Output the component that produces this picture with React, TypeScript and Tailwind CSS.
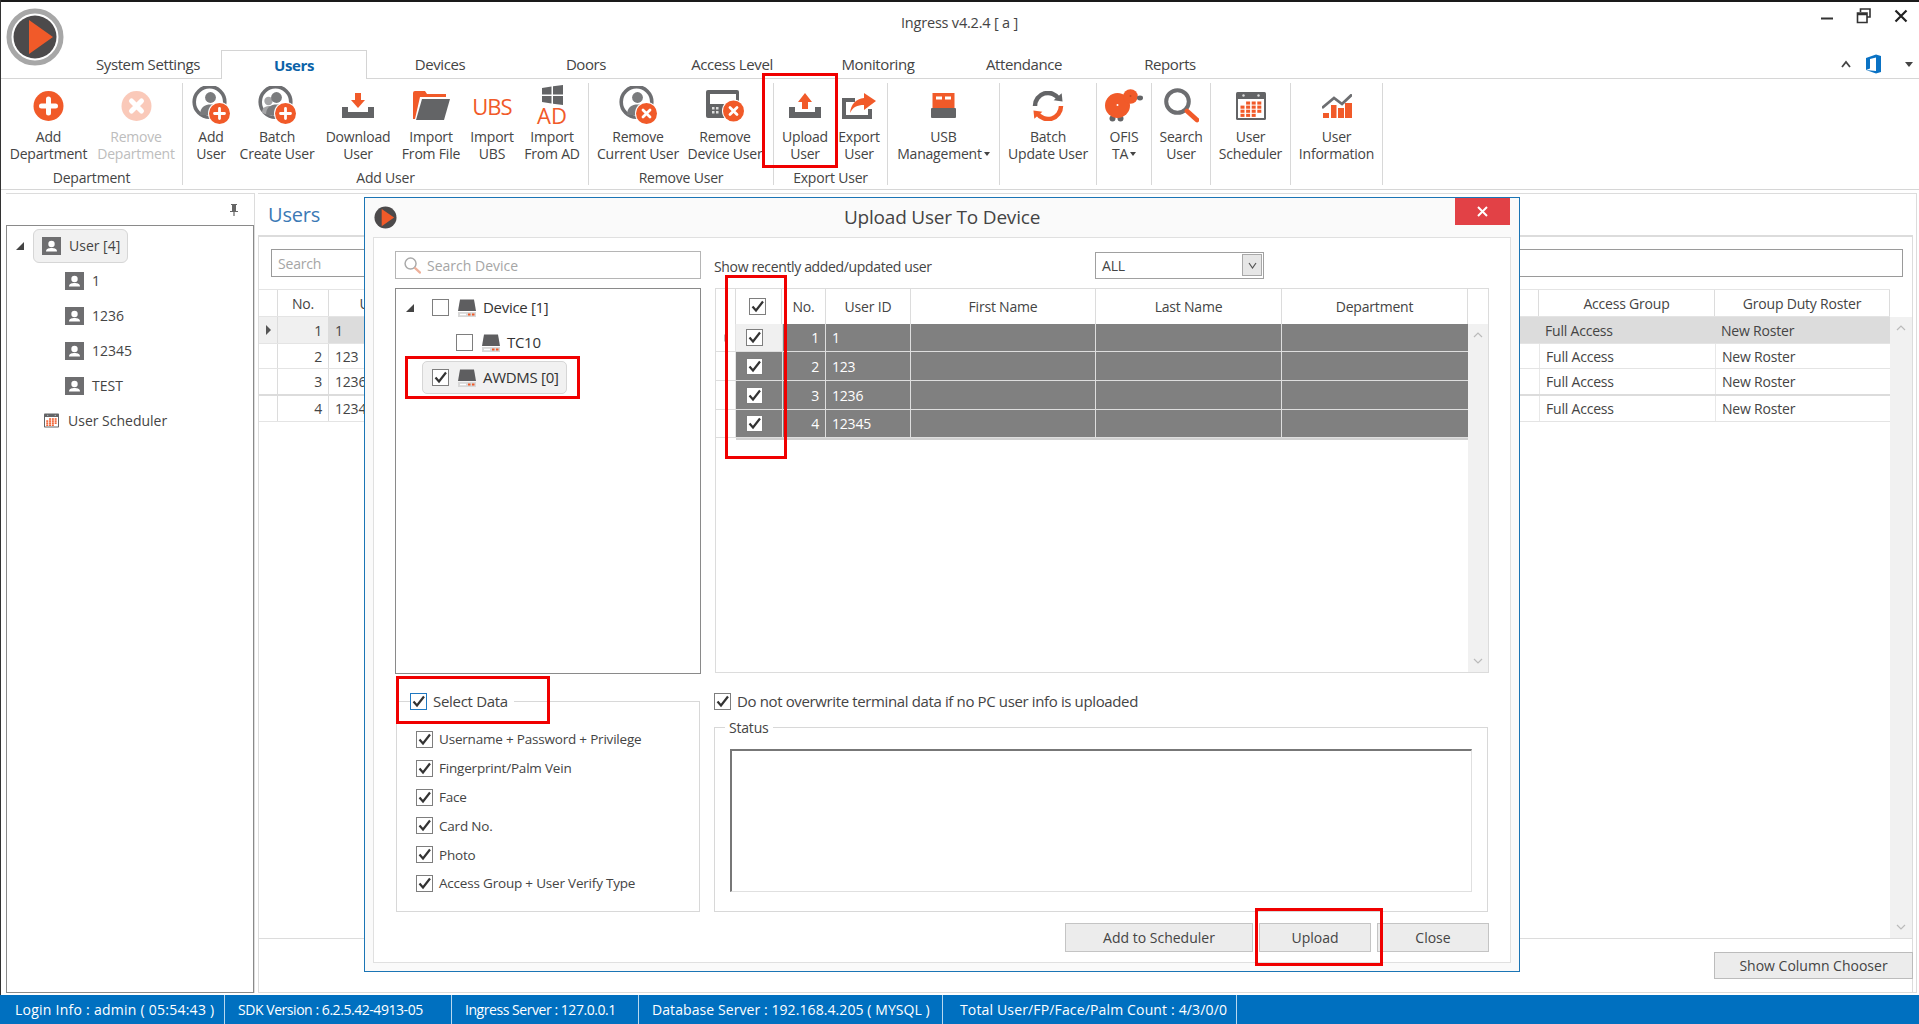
import React from "react";

const OR = "#f15a29";
const GR = "#636466";

function Logo({ size }: { size: number }) {
  return (
    <svg width={size} height={size} viewBox="0 0 58 58" className="shrink-0">
      <circle cx="29" cy="29" r="26" fill="none" stroke="#a7a7a7" strokeWidth="5" />
      <circle cx="29" cy="29" r="21.5" fill="#4c4a4b" />
      <path d="M23 12 L47 29 L23 46 Z" fill={OR} />
    </svg>
  );
}
function SmallLogo() {
  return (
    <svg width="23" height="23" viewBox="0 0 24 24" className="shrink-0">
      <circle cx="12" cy="12" r="11.5" fill="#4c4a4b" />
      <path d="M8 3 L21 12 L8 21 Z" fill={OR} />
    </svg>
  );
}
function CircleBadge({ kind, faded }: { kind: "plus" | "x"; faded?: boolean }) {
  return (
    <svg width="31" height="30" viewBox="0 0 30 30" opacity={faded ? 0.32 : 1}>
      <circle cx="15" cy="15" r="15" fill={OR} />
      {kind === "plus" ? (
        <path d="M15 8 V22 M8 15 H22" stroke="#fff" strokeWidth="5" strokeLinecap="round" />
      ) : (
        <path d="M10 10 L20 20 M20 10 L10 20" stroke="#fff" strokeWidth="5" strokeLinecap="round" />
      )}
    </svg>
  );
}
function Badge({ kind, cx, cy }: { kind: "plus" | "x"; cx: number; cy: number }) {
  return (
    <g>
      <circle cx={cx} cy={cy} r="11.5" fill="#fff" />
      <circle cx={cx} cy={cy} r="10.5" fill={OR} />
      {kind === "plus" ? (
        <path d={`M${cx} ${cy - 5} V${cy + 5} M${cx - 5} ${cy} H${cx + 5}`} stroke="#fff" strokeWidth="2.8" strokeLinecap="round" />
      ) : (
        <path d={`M${cx - 3.5} ${cy - 3.5} L${cx + 3.5} ${cy + 3.5} M${cx + 3.5} ${cy - 3.5} L${cx - 3.5} ${cy + 3.5}`} stroke="#fff" strokeWidth="2.8" strokeLinecap="round" />
      )}
    </g>
  );
}
function PersonRing({ kind, batch }: { kind: "plus" | "x"; batch?: boolean }) {
  return (
    <svg width="39" height="39" viewBox="0 0 39 39">
      <circle cx="17.5" cy="16" r="15.3" fill="none" stroke="#6d6e71" strokeWidth="3.6" />
      {batch && <circle cx="10.5" cy="15" r="4.2" fill="#a5a5a7" />}
      {batch && <path d="M4 27 C4 21 8 20 12 20 L14 30 Z" fill="#a5a5a7" />}
      <circle cx="18.5" cy="11.5" r="5.4" fill="#7a7b7d" />
      <path d="M8 29 C8 21 13 18.5 18.5 18.5 C24 18.5 29 21 29 29 Z" fill="#7a7b7d" />
      <Badge kind={kind} cx={27.5} cy={27.5} />
    </svg>
  );
}
function Tray({ up }: { up?: boolean }) {
  return (
    <svg width="32" height="25" viewBox="0 0 32 25">
      <path d="M0 14 H6 V19 H26 V14 H32 V25 H0 Z" fill={GR} />
      {up ? (
        <path d="M16 0 L23 9 H19 V16 H13 V9 H9 Z" fill={OR} />
      ) : (
        <path d="M13 0 H19 V7 H23 L16 15 L9 7 H13 Z" fill={OR} />
      )}
    </svg>
  );
}
function Folder() {
  return (
    <svg width="37" height="29" viewBox="0 0 37 29">
      <path d="M0 2 Q0 0 2 0 H12 L14 3 H33 V6 H7 L2 28 H0 Z" fill={OR} />
      <path d="M9 8 H37 L31 29 H3 Z" fill={GR} />
    </svg>
  );
}
function UbsIcon() {
  return <span className="text-[22px] leading-[22px] font-medium text-[#f15a29] tracking-[-1px]">UBS</span>;
}
function AdIcon() {
  return (
    <div className="flex flex-col items-center">
      <svg width="21" height="20" viewBox="0 0 21 20">
        <path d="M0 3 L9.5 1.5 V9.5 H0 Z M11 1.2 L21 0 V9.5 H11 Z M0 11 H9.5 V18.5 L0 17 Z M11 11 H21 V20 L11 18.7 Z" fill={GR} />
      </svg>
      <span className="text-[22px] leading-[21px] text-[#f15a29] tracking-[0px]">AD</span>
    </div>
  );
}
function DeviceX() {
  return (
    <svg width="39" height="32" viewBox="0 0 39 32">
      <rect x="0" y="0" width="33" height="28" rx="2" fill={GR} />
      <rect x="4" y="4" width="26" height="10" fill="#fff" />
      <rect x="6" y="17" width="2.5" height="2.5" fill="#ddd" />
      <rect x="10" y="17" width="2.5" height="2.5" fill="#ddd" />
      <rect x="6" y="21" width="2.5" height="2.5" fill="#ddd" />
      <rect x="10" y="21" width="2.5" height="2.5" fill="#ddd" />
      <Badge kind="x" cx={27.5} cy={21} />
    </svg>
  );
}
function ExportIcon() {
  return (
    <svg width="34" height="26" viewBox="0 0 34 26">
      <path d="M0 5 H13 V9 H4 V22 H26 V16 H30 V26 H0 Z" fill={GR} />
      <path d="M22 0 L34 8 L22 17 V12 C15 12 11 14 8 20 C9 11 14 6 22 5 Z" fill={OR} />
    </svg>
  );
}
function UsbIcon() {
  return (
    <svg width="25" height="25" viewBox="0 0 25 25">
      <rect x="1.5" y="0" width="22" height="15" fill={OR} />
      <rect x="5" y="3.5" width="6" height="3" fill="#fff" />
      <rect x="14" y="3.5" width="6" height="3" fill="#fff" />
      <rect x="0" y="15" width="25" height="10" rx="1" fill={GR} />
    </svg>
  );
}
function SyncIcon() {
  return (
    <svg width="32" height="30" viewBox="0 0 32 30">
      <path d="M3 15 A13 13 0 0 1 27 8" fill="none" stroke={GR} strokeWidth="4.5" />
      <path d="M22 10 L31 10 L29 2 Z" fill={GR} transform="rotate(8 27 7)" />
      <path d="M29 15 A13 13 0 0 1 5 22" fill="none" stroke={OR} strokeWidth="4.5" />
      <path d="M10 20 L1 20 L3 28 Z" fill={OR} transform="rotate(8 5 23)" />
    </svg>
  );
}
function SheepIcon() {
  return (
    <svg width="39" height="33" viewBox="0 0 39 33">
      <circle cx="7.5" cy="29.5" r="3" fill={GR} />
      <circle cx="15.5" cy="29.5" r="3" fill={GR} />
      <circle cx="12.5" cy="16.5" r="12.5" fill={OR} />
      <circle cx="25.5" cy="7.5" r="7.3" fill={OR} />
      <circle cx="25.5" cy="7" r="1" fill="#c44a20" />
      <ellipse cx="35" cy="9" rx="3" ry="2.4" fill={GR} />
      <circle cx="12.5" cy="16" r="1" fill="#fff" />
    </svg>
  );
}
function SearchIcon({ size = 35, thin }: { size?: number; thin?: boolean }) {
  return (
    <svg width={size} height={size} viewBox="0 0 35 35">
      <circle cx="13.5" cy="13.5" r="11.3" fill="none" stroke={thin ? "#a9a9a9" : "#6d6e71"} strokeWidth={thin ? 3 : 4} />
      <path d="M23 23 L33 32" stroke={thin ? "#eeb09a" : OR} strokeWidth="4.8" strokeLinecap="round" />
    </svg>
  );
}
function CalendarIcon({ w = 30, h = 28 }: { w?: number; h?: number }) {
  const cells: React.ReactNode[] = [];
  for (let r = 0; r < 4; r++)
    for (let c = 0; c < 4; c++) {
      if ((r === 0 && c === 0) || (r === 3 && c === 3)) continue;
      cells.push(<rect key={`${r}-${c}`} x={4.5 + c * 5.6} y={9.5 + r * 4.1} width="4" height="3.1" fill={OR} />);
    }
  return (
    <svg width={w} height={h} viewBox="0 0 30 28">
      <rect x="0" y="0" width="30" height="28" rx="1.5" fill={GR} />
      <rect x="2" y="7" width="26" height="19" fill="#fff" />
      <circle cx="7.5" cy="3.5" r="1.2" fill="#ddd" />
      <circle cx="22.5" cy="3.5" r="1.2" fill="#ddd" />
      {cells}
    </svg>
  );
}
function ChartIcon() {
  return (
    <svg width="30" height="24" viewBox="0 0 30 24">
      <path d="M0 14 L12 4 L20 10 L30 0.5" fill="none" stroke="#6d6e71" strokeWidth="2.8" />
      <rect x="1" y="19" width="6" height="5" fill={OR} />
      <rect x="9" y="11" width="5.5" height="13" fill={OR} />
      <rect x="16" y="14" width="6" height="10" fill={OR} />
      <rect x="23" y="9" width="7" height="15" fill={OR} />
    </svg>
  );
}
function OfficeIcon() {
  return (
    <svg width="17" height="20" viewBox="0 0 17 20">
      <path d="M1 4 L11 0.5 L16 2 V18 L11 19.5 L1 16 L11 17 V3.5 L5 5 V14.5 L1 16 Z" fill="#0a72c4" />
    </svg>
  );
}
function Check() {
  return (
    <svg width="15" height="15" viewBox="0 0 15 15">
      <path d="M2.5 7.5 L6 11.5 L13 2.5" fill="none" stroke="#333" strokeWidth="2.2" />
    </svg>
  );
}
function Box({ on, blue }: { on?: boolean; blue?: boolean }) {
  return (
    <span className={blue ? "w-[17px] h-[17px] shrink-0 flex items-center justify-center bg-white border border-[#1f78c1]" : "w-[17px] h-[17px] shrink-0 flex items-center justify-center bg-white border border-[#7e7e7e]"}>
      {on && <Check />}
    </span>
  );
}
function UserSquare() {
  return (
    <svg width="19" height="18" viewBox="0 0 19 18" className="shrink-0">
      <rect width="19" height="18" fill="#6e6e70" />
      <circle cx="9.5" cy="7" r="3.2" fill="#fff" />
      <path d="M4 14.5 C4 11.5 7 11 9.5 11 C12 11 15 11.5 15 14.5 Z" fill="#fff" />
    </svg>
  );
}
function DeviceSmall() {
  return (
    <svg width="18" height="18" viewBox="0 0 18 18" className="shrink-0">
      <path d="M2 0.5 H16 L18 12 H0 Z" fill="#5e5e60" />
      <rect x="0" y="13" width="18" height="5" fill="#d8d8d8" />
      <rect x="10" y="14.5" width="2.5" height="2" fill={OR} />
      <rect x="14" y="14.5" width="2.5" height="2" fill={OR} />
      <rect x="2" y="14.8" width="6" height="1.4" fill="#fff" />
    </svg>
  );
}
function TreeTri() {
  return <span className="w-0 h-0 border-l-[8px] border-l-transparent border-b-[8px] border-b-[#444] shrink-0" />;
}

type Item = { w: string; label: string[]; icon: React.ReactNode; muted?: boolean; caret?: boolean };
type Group = { w: string; pr: string; name?: string; items: Item[] };

const groups: Group[] = [
  { w: "w-[182px]", pr: "justify-start", name: "Department", items: [
    { w: "w-[95px]", label: ["Add", "Department"], icon: <CircleBadge kind="plus" /> },
    { w: "w-[80px]", label: ["Remove", "Department"], icon: <CircleBadge kind="x" faded />, muted: true },
  ] },
  { w: "w-[406px]", pr: "justify-start", name: "Add User", items: [
    { w: "w-[56px]", label: ["Add", "User"], icon: <PersonRing kind="plus" /> },
    { w: "w-[76px]", label: ["Batch", "Create User"], icon: <PersonRing kind="plus" batch /> },
    { w: "w-[86px]", label: ["Download", "User"], icon: <Tray /> },
    { w: "w-[60px]", label: ["Import", "From File"], icon: <Folder /> },
    { w: "w-[62px]", label: ["Import", "UBS"], icon: <UbsIcon /> },
    { w: "w-[58px]", label: ["Import", "From AD"], icon: <AdIcon /> },
  ] },
  { w: "w-[185px]", pr: "justify-start", name: "Remove User", items: [
    { w: "w-[98px]", label: ["Remove", "Current User"], icon: <PersonRing kind="x" /> },
    { w: "w-[76px]", label: ["Remove", "Device User"], icon: <DeviceX /> },
  ] },
  { w: "w-[114px]", pr: "justify-start", name: "Export User", items: [
    { w: "w-[62px]", label: ["Upload", "User"], icon: <Tray up /> },
    { w: "w-[46px]", label: ["Export", "User"], icon: <ExportIcon /> },
  ] },
  { w: "w-[112px]", pr: "justify-center", items: [{ w: "w-[112px]", label: ["USB", "Management"], icon: <UsbIcon />, caret: true }] },
  { w: "w-[97px]", pr: "justify-center", items: [{ w: "w-[97px]", label: ["Batch", "Update User"], icon: <SyncIcon /> }] },
  { w: "w-[55px]", pr: "justify-center", items: [{ w: "w-[55px]", label: ["OFIS", "TA"], icon: <SheepIcon />, caret: true }] },
  { w: "w-[59px]", pr: "justify-center", items: [{ w: "w-[59px]", label: ["Search", "User"], icon: <SearchIcon /> }] },
  { w: "w-[80px]", pr: "justify-center", items: [{ w: "w-[80px]", label: ["User", "Scheduler"], icon: <CalendarIcon /> }] },
  { w: "w-[92px]", pr: "justify-center", items: [{ w: "w-[92px]", label: ["User", "Information"], icon: <ChartIcon /> }] },
];

const tabs = ["System Settings", "Users", "Devices", "Doors", "Access Level", "Monitoring", "Attendance", "Reports"];
const mainRows = [
  { h: "h-[27px] border-b border-[#e4e4e4]", no: "1", id: "1", sel: true },
  { h: "h-[25px] border-b border-[#e4e4e4]", no: "2", id: "123" },
  { h: "h-[27px] border-b-2 border-[#dcdcdc]", no: "3", id: "1236" },
  { h: "h-[26px] border-b border-[#e4e4e4]", no: "4", id: "12345" },
];
const dlgRows = [
  { h: "h-[28px]", no: "1", id: "1", light: true },
  { h: "h-[29px]", no: "2", id: "123" },
  { h: "h-[29px]", no: "3", id: "1236" },
  { h: "h-[28px]", no: "4", id: "12345" },
];
const dataItems = ["Username + Password + Privilege", "Fingerprint/Palm Vein", "Face", "Card No.", "Photo", "Access Group + User Verify Type"];
const statusItems = [
  { w: "w-[225px] pl-[15px] tracking-[0.25px]", t: "Login Info : admin ( 05:54:43 )" },
  { w: "w-[227px] pl-[13px] tracking-[-0.45px]", t: "SDK Version : 6.2.5.42-4913-05" },
  { w: "w-[187px] pl-[13px] tracking-[-0.45px]", t: "Ingress Server : 127.0.0.1" },
  { w: "w-[304px] pl-[13px] tracking-[0.08px]", t: "Database Server : 192.168.4.205 ( MYSQL )" },
  { w: "w-[294px] pl-[17px] tracking-[0.15px]", t: "Total User/FP/Face/Palm Count : 4/3/0/0" },
];

export default function App() {
  return (
    <div className="relative w-[1919px] h-[1024px] overflow-hidden bg-white flex flex-col text-[14px] text-[#444] font-['Open_Sans',sans-serif] tracking-[-0.2px]">
      <div className="h-[2px] bg-[#1a1a1a] shrink-0" />
      <div className="absolute left-0 top-0 bottom-[29px] w-px bg-[#333]" />

      {/* Header */}
      <div className="h-[76px] shrink-0 flex">
        <div className="w-[75px] shrink-0 pl-[6px] pt-[6px]">
          <Logo size={58} />
        </div>
        <div className="flex-1 flex flex-col">
          <div className="h-[41px] flex items-start">
            <div className="w-[826px] shrink-0" />
            <span className="mt-[11px] text-[14.5px] leading-[20px]">Ingress v4.2.4 [ a ]</span>
            <div className="flex-1 flex justify-end items-center gap-[22px] pr-[11px] pt-[6px]">
              <svg width="14" height="14" viewBox="0 0 14 14"><path d="M1 9.5 H13" stroke="#333" strokeWidth="2" /></svg>
              <svg width="16" height="16" viewBox="0 0 16 16"><path d="M4.5 4 V1 H14 V9 H11.5 M1.5 5 H11 V14.5 H1.5 Z M1.5 6.5 H11" fill="none" stroke="#333" strokeWidth="1.6" /></svg>
              <svg width="14" height="14" viewBox="0 0 14 14"><path d="M1.5 1.5 L12.5 12.5 M12.5 1.5 L1.5 12.5" stroke="#222" strokeWidth="2.2" /></svg>
            </div>
          </div>
          <div className="flex-1 flex items-end text-[15px] tracking-[-0.4px]">
            {tabs.map((t) =>
              t === "Users" ? (
                <div key={t} className="w-[146px] h-[29px] -mb-px bg-white border border-b-0 border-[#d4d4d4] flex items-center justify-center font-bold text-[#0b62a8] relative z-10">
                  {t}
                </div>
              ) : (
                <div key={t} className="w-[146px] h-[28px] flex items-center justify-center">{t}</div>
              )
            )}
            <div className="flex-1 h-[28px] flex items-center justify-end gap-[14px] pr-[6px]">
              <svg width="10" height="8" viewBox="0 0 10 8"><path d="M1 7 L5 2 L9 7" fill="none" stroke="#444" strokeWidth="1.8" /></svg>
              <OfficeIcon />
              <span className="ml-[9px] w-0 h-0 border-x-[4px] border-x-transparent border-t-[5px] border-t-[#444]" />
            </div>
          </div>
        </div>
      </div>

      {/* Ribbon */}
      <div className="h-[112px] shrink-0 border-t border-b border-[#d6d6d6] flex items-start pt-[4px] pl-px">
        {groups.map((g, i) => (
          <div key={i} className={`${g.w} h-[102px] border-r border-[#d8d8d8] flex flex-col`}>
            <div className={`flex ${g.pr}`}>
              {g.items.map((it) => (
                <div key={it.label.join(" ")} className={`${it.w} shrink-0 flex flex-col items-center`}>
                  <div className="h-[45px] flex items-center justify-center">{it.icon}</div>
                  <div className={it.muted ? "flex flex-col items-center leading-[17px] whitespace-nowrap text-[#bdbdbd]" : "flex flex-col items-center leading-[17px] whitespace-nowrap"}>
                    <span>{it.label[0]}</span>
                    <span className="flex items-center gap-[2px]">
                      {it.label[1]}
                      {it.caret && <span className="w-0 h-0 border-x-[3.5px] border-x-transparent border-t-[4px] border-t-[#444]" />}
                    </span>
                  </div>
                </div>
              ))}
            </div>
            {g.name && <div className="mt-[8px] text-center leading-[16px] whitespace-nowrap">{g.name}</div>}
          </div>
        ))}
      </div>

      {/* Body */}
      <div className="mt-[3px] h-[800px] shrink-0 flex pl-[6px] pr-[2px]">
        <div className="w-[249px] shrink-0 flex flex-col border-t border-[#dcdcdc] border-r">
          <div className="h-[31px] shrink-0 flex justify-end items-center pr-[15px]">
            <svg width="10" height="12" viewBox="0 0 10 12"><path d="M2 0 H8 V1 H7 V7 H9 V8 H5.6 V12 H4.4 V8 H1 V7 H3 V1 H2 Z" fill="#666" /></svg>
          </div>
          <div className="flex-1 border border-[#8a8a8a] flex flex-col pl-[9px] pt-[2px] tracking-[0px]">
            <div className="flex items-center gap-[9px] h-[35px]">
              <TreeTri />
              <div className="flex items-center gap-[8px] h-[34px] pl-[8px] pr-[8px] w-[95px] rounded-[6px] bg-[#f1f1f1] border border-[#d6d6d6]">
                <UserSquare />
                <span className="whitespace-nowrap">User [4]</span>
              </div>
            </div>
            {["1", "1236", "12345", "TEST"].map((t) => (
              <div key={t} className="h-[35px] flex items-center pl-[49px] gap-[8px]">
                <UserSquare />
                <span>{t}</span>
              </div>
            ))}
            <div className="h-[35px] flex items-center pl-[28px] gap-[9px]">
              <CalendarIcon w={15} h={15} />
              <span>User Scheduler</span>
            </div>
          </div>
        </div>

        <div className="flex-1 ml-[3px] flex flex-col border-t border-b border-r border-[#dcdcdc] pr-[4px]">
          <div className="h-[41px] shrink-0 flex items-center pl-[10px] text-[20px] text-[#3b79b5]">Users</div>
          <div className="flex-1 flex flex-col border-t-2 border-x border-[#dcdcdc] -mr-px">
            <div className="h-[52px] shrink-0 pl-[12px] pr-[9px] pt-[12px]">
              <div className="h-[28px] border border-[#9a9a9a] flex items-center pl-[6px] text-[#a5a5a5]">Search</div>
            </div>
            <div className="h-[650px] shrink-0 flex border-b border-[#dcdcdc]">
              <div className="flex-1 flex flex-col">
                <div className="h-[28px] shrink-0 flex border-y border-[#e4e4e4]">
                  <div className="w-[19px] border-r border-[#dcdcdc]" />
                  <div className="w-[51px] flex items-center justify-center border-r border-[#dcdcdc]">No.</div>
                  <div className="w-[108px] flex items-center justify-center">User ID</div>
                  <div className="flex-1 border-r border-[#dcdcdc]" />
                  <div className="w-[176px] flex items-center justify-center border-r border-[#dcdcdc]">Access Group</div>
                  <div className="w-[175px] flex items-center justify-center border-r border-[#dcdcdc]">Group Duty Roster</div>
                </div>
                {mainRows.map((r) => (
                  <div key={r.no} className={`${r.h} shrink-0 flex`}>
                    <div className={r.sel ? "w-[19px] flex items-center justify-center bg-[#f0f0f0] border-r border-[#dcdcdc]" : "w-[19px] border-r border-[#dcdcdc]"}>
                      {r.sel && <span className="w-0 h-0 border-y-[5px] border-y-transparent border-l-[5px] border-l-[#555]" />}
                    </div>
                    <div className={r.sel ? "w-[51px] flex items-center justify-end pr-[6px] bg-[#f0f0f0] border-r border-[#dcdcdc]" : "w-[51px] flex items-center justify-end pr-[6px] border-r border-[#dcdcdc]"}>{r.no}</div>
                    <div className={r.sel ? "flex-1 flex items-center pl-[6px] bg-[#dcdcdc]" : "flex-1 flex items-center pl-[6px]"}>{r.id}</div>
                    <div className={r.sel ? "w-[176px] flex items-center pl-[6px] bg-[#dcdcdc]" : "w-[176px] flex items-center pl-[6px] border-l border-[#e8e8e8]"}>Full Access</div>
                    <div className={r.sel ? "w-[175px] flex items-center pl-[6px] bg-[#dcdcdc]" : "w-[175px] flex items-center pl-[6px] border-l border-[#e8e8e8]"}>New Roster</div>
                  </div>
                ))}
              </div>
              <div className="w-[22px] shrink-0 flex flex-col pt-[28px]">
                <div className="flex-1 bg-[#f1f1f1] flex flex-col justify-between items-center py-[8px]">
                  <svg width="10" height="6" viewBox="0 0 10 6"><path d="M1 5 L5 1 L9 5" fill="none" stroke="#bbb" strokeWidth="1.2" /></svg>
                  <svg width="10" height="6" viewBox="0 0 10 6"><path d="M1 1 L5 5 L9 1" fill="none" stroke="#bbb" strokeWidth="1.2" /></svg>
                </div>
              </div>
            </div>
            <div className="flex justify-end pt-[13px] -mr-px">
              <div className="w-[199px] h-[27px] border border-[#bcbcbc] bg-[#ececec] flex items-center justify-center tracking-[0px]">Show Column Chooser</div>
            </div>
          </div>
        </div>
      </div>

      {/* Status bar */}
      <div className="mt-[2px] h-[29px] shrink-0 bg-[#0070c0] text-white flex">
        {statusItems.map((s) => (
          <div key={s.t} className={`${s.w} border-r border-[#b8d8ef] flex items-center whitespace-nowrap`}>{s.t}</div>
        ))}
      </div>

      {/* Dialog */}
      <div className="absolute left-[364px] top-[197px] w-[1156px] h-[775px] border border-[#1b75b5] bg-[#fafafa] flex flex-col">
        <div className="h-[39px] shrink-0 grid grid-cols-[1fr_auto_1fr]">
          <div className="flex items-center pl-[9px]"><SmallLogo /></div>
          <div className="flex items-center text-[19px]">Upload User To Device</div>
          <div className="flex justify-end items-start pr-[9px]">
            <div className="w-[55px] h-[27px] bg-[#e24146] flex items-center justify-center">
              <svg width="11" height="11" viewBox="0 0 11 11"><path d="M1 1 L10 10 M10 1 L1 10" stroke="#fff" strokeWidth="2" /></svg>
            </div>
          </div>
        </div>
        <div className="flex-1 mx-[8px] mb-[8px] bg-white border border-[#e0e0e0] flex flex-col">
          <div className="flex gap-[13px] pl-[21px] pt-[13px]">
            {/* left column */}
            <div className="w-[306px] shrink-0 flex flex-col">
              <div className="h-[28px] border border-[#b5b5b5] flex items-center pl-[8px] gap-[6px] text-[#a5a5a5] tracking-[0px]">
                <SearchIcon size={17} thin />
                <span className="whitespace-nowrap">Search Device</span>
              </div>
              <div className="mt-[9px] h-[386px] border border-[#8a8a8a] flex flex-col pt-[8px] text-[15px] tracking-[-0.3px] text-[#333]">
                <div className="h-[21px] flex items-center pl-[10px]">
                  <TreeTri />
                  <span className="ml-[18px]"><Box /></span>
                  <span className="ml-[9px]"><DeviceSmall /></span>
                  <span className="ml-[7px] whitespace-nowrap">Device [1]</span>
                </div>
                <div className="mt-[14px] h-[21px] flex items-center pl-[60px]">
                  <Box />
                  <span className="ml-[9px]"><DeviceSmall /></span>
                  <span className="ml-[7px]">TC10</span>
                </div>
                <div className="mt-[8px] ml-[26px] w-[145px] h-[33px] bg-[#f1f1f1] border border-[#d6d6d6] rounded-[5px] flex items-center pl-[9px]">
                  <Box on />
                  <span className="ml-[9px]"><DeviceSmall /></span>
                  <span className="ml-[7px] whitespace-nowrap">AWDMS [0]</span>
                </div>
              </div>
              <fieldset className="mt-[19px] ml-px w-[304px] h-[219px] border border-[#d8d8d8]">
                <legend className="ml-[13px] h-[17px] flex items-center gap-[6px] pr-[6px] text-[15px] tracking-[-0.3px]">
                  <Box on blue />
                  <span className="leading-[17px]">Select Data</span>
                </legend>
                <div className="flex flex-col pl-[19px] pt-[21px] gap-[11.8px] text-[13.5px]">
                  {dataItems.map((d) => (
                    <div key={d} className="h-[17px] flex items-center gap-[6px] whitespace-nowrap">
                      <Box on />
                      <span>{d}</span>
                    </div>
                  ))}
                </div>
              </fieldset>
            </div>
            {/* right column */}
            <div className="w-[774px] shrink-0 flex flex-col">
              <div className="h-[28px] flex items-center">
                <span className="w-[381px] whitespace-nowrap mt-[3px] tracking-[-0.35px]">Show recently added/updated user</span>
                <div className="w-[169px] h-[27px] border border-[#a0a0a0] flex items-center justify-between pl-[6px] pr-px">
                  <span>ALL</span>
                  <span className="w-[20px] h-[22px] bg-[#e6e6e6] border border-[#a8a8a8] flex items-center justify-center">
                    <svg width="9" height="7" viewBox="0 0 9 7"><path d="M1 1 L4.5 6 L8 1" fill="none" stroke="#555" strokeWidth="1.2" /></svg>
                  </span>
                </div>
              </div>
              <div className="mt-[9px] ml-px w-[774px] h-[385px] border border-[#dcdcdc] flex flex-col">
                <div className="h-[35px] shrink-0 flex">
                  <div className="w-[20px] border-r border-[#dcdcdc]" />
                  <div className="w-[46px] border-r border-[#dcdcdc] flex items-center pl-[13px]"><Box on /></div>
                  <div className="w-[44px] border-r border-[#dcdcdc] flex items-center justify-center">No.</div>
                  <div className="w-[85px] border-r border-[#dcdcdc] flex items-center justify-center">User ID</div>
                  <div className="w-[185px] border-r border-[#dcdcdc] flex items-center justify-center">First Name</div>
                  <div className="w-[186px] border-r border-[#dcdcdc] flex items-center justify-center">Last Name</div>
                  <div className="w-[186px] border-r border-[#dcdcdc] flex items-center justify-center">Department</div>
                </div>
                <div className="flex-1 flex">
                  <div className="w-[752px] shrink-0 flex flex-col">
                    {dlgRows.map((r) => (
                      <div key={r.no} className={`${r.h} shrink-0 flex border-b border-[#dedede]`}>
                        <div className="w-[20px] border-r border-[#e4e4e4] flex items-center justify-center">
                          {r.light && <span className="w-0 h-0 border-y-[4px] border-y-transparent border-l-[4px] border-l-[#bbb]" />}
                        </div>
                        <div className={r.light ? "w-[46px] bg-[#f0f0f0] flex items-center pl-[10px]" : "w-[46px] bg-[#808080] flex items-center pl-[10px]"}><Box on /></div>
                        <div className="w-[44px] bg-[#808080] border-x border-[#dedede] text-white flex items-center justify-end pr-[6px]">{r.no}</div>
                        <div className="w-[85px] bg-[#808080] border-r border-[#dedede] text-white flex items-center pl-[6px]">{r.id}</div>
                        <div className="w-[185px] bg-[#808080] border-r border-[#dedede]" />
                        <div className="w-[186px] bg-[#808080] border-r border-[#dedede]" />
                        <div className="w-[186px] bg-[#808080]" />
                      </div>
                    ))}
                    <div className="h-[2px] bg-[#d0d0d0] ml-[20px]" />
                  </div>
                  <div className="flex-1 bg-[#f1f1f1] flex flex-col justify-between items-center py-[8px]">
                    <svg width="10" height="6" viewBox="0 0 10 6"><path d="M1 5 L5 1 L9 5" fill="none" stroke="#bbb" strokeWidth="1.2" /></svg>
                    <svg width="10" height="6" viewBox="0 0 10 6"><path d="M1 1 L5 5 L9 1" fill="none" stroke="#bbb" strokeWidth="1.2" /></svg>
                  </div>
                </div>
              </div>
              <div className="mt-[20px] h-[17px] flex items-center gap-[6px] whitespace-nowrap">
                <Box on />
                <span className="text-[15px] tracking-[-0.37px]">Do not overwrite terminal data if no PC user info is uploaded</span>
              </div>
              <fieldset className="mt-[8px] h-[194px] border border-[#d8d8d8]">
                <legend className="ml-[10px] px-[4px] h-[19px] leading-[19px]">Status</legend>
                <div className="mx-[15px] mt-[12px] h-[143px] border-t-2 border-l-2 border-[#777] border-r border-b border-r-[#e0e0e0] border-b-[#e0e0e0]" />
              </fieldset>
            </div>
          </div>
          <div className="flex justify-end gap-[6px] pr-[21px] mt-[11px] tracking-[0px]">
            <div className="w-[188px] h-[29px] border border-[#c4c4c4] bg-[#ececec] flex items-center justify-center">Add to Scheduler</div>
            <div className="w-[112px] h-[29px] border border-[#c4c4c4] bg-[#ececec] flex items-center justify-center">Upload</div>
            <div className="w-[112px] h-[29px] border border-[#c4c4c4] bg-[#ececec] flex items-center justify-center">Close</div>
          </div>
        </div>
      </div>

      {/* Red annotation boxes */}
      <div className="absolute left-[762px] top-[73px] w-[76px] h-[95px] border-[3px] border-[#f00000]" />
      <div className="absolute left-[405px] top-[356px] w-[175px] h-[43px] border-[3px] border-[#f00000]" />
      <div className="absolute left-[725px] top-[275px] w-[62px] h-[184px] border-[3px] border-[#f00000]" />
      <div className="absolute left-[396px] top-[676px] w-[154px] h-[48px] border-[3px] border-[#f00000]" />
      <div className="absolute left-[1255px] top-[908px] w-[128px] h-[58px] border-[3px] border-[#f00000]" />
    </div>
  );
}
